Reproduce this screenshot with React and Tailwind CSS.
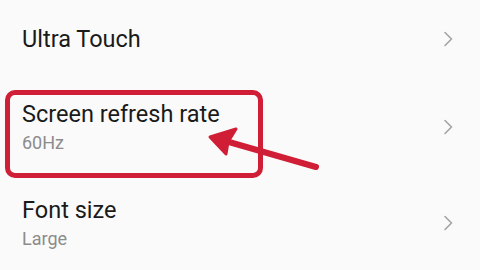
import React from 'react';

const Chevron = () => (
  <svg width="10" height="16" viewBox="0 0 10 16" className="shrink-0">
    <path d="M2 1.5 L8.5 8 L2 14.5" fill="none" stroke="#a3a3a3" strokeWidth="1.6" strokeLinecap="round" strokeLinejoin="round" />
  </svg>
);

const Row = ({ title, sub, className }) => (
  <div className={`flex items-center justify-between pl-[22px] pr-[27px] ${className}`}>
    <div className="flex flex-col">
      <span className="text-[23.5px] leading-[28px] text-[#1a1a1a]">{title}</span>
      {sub && <span className="mt-[4px] text-[18px] leading-[22px] text-[#8c8c8c]">{sub}</span>}
    </div>
    <Chevron />
  </div>
);

export default function App() {
  return (
    <div className="relative h-[270px] w-[480px] overflow-hidden bg-[#fafafa]" style={{ fontFamily: 'Roboto, "Noto Sans", sans-serif' }}>
      <div className="flex flex-col pt-[25px]">
        <Row title="Ultra Touch" />
        <Row title="Screen refresh rate" sub="60Hz" className="mt-[47px]" />
        <Row title="Font size" sub="Large" className="mt-[42px]" />
      </div>

      {/* red annotation */}
      <div className="absolute left-[5px] top-[90px] h-[88px] w-[258px] rounded-[10px] border-[5px] border-[#cf1e35]" />
      <svg className="absolute left-0 top-0" width="480" height="270" viewBox="0 0 480 270">
        <line x1="316" y1="167" x2="222" y2="140" stroke="#cf1e35" strokeWidth="6" strokeLinecap="round" />
        <path d="M210 137 L236 129 L228 142 L226 154 Z" fill="#cf1e35" stroke="#cf1e35" strokeWidth="3" strokeLinejoin="round" />
      </svg>
    </div>
  );
}
